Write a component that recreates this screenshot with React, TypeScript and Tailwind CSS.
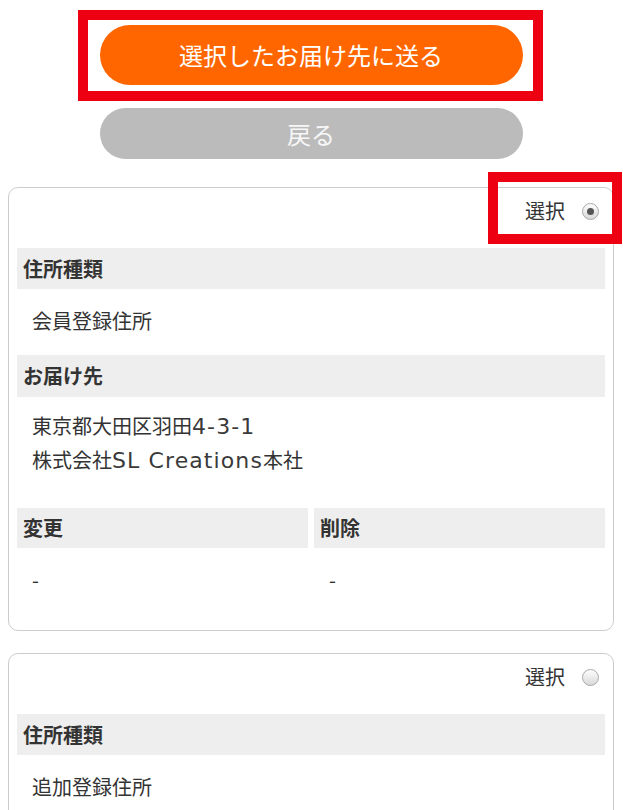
import React from 'react';

type Address = {
  kind: string;
  lines: string[];
  checked: boolean;
};

const ADDRESSES: Address[] = [
  { kind: '会員登録住所', lines: ['東京都大田区羽田4-3-1', '株式会社SL Creations本社'], checked: true },
  { kind: '追加登録住所', lines: ['東京都港区芝公園4-2-8', '株式会社SL Creations東京支店'], checked: false },
];

// latin runs are set in a wider face, like the original page
function Mixed({ text }: { text: string }) {
  const parts = text.split(/([A-Za-z0-9\- ]+)/).filter(Boolean);
  return (
    <>
      {parts.map((p, i) =>
        /^[A-Za-z0-9\- ]+$/.test(p) ? (
          <span key={i} className="font-['DejaVu_Sans',sans-serif] text-[22px] leading-none tracking-[1.1px] text-[#3a3a3a]">
            {p}
          </span>
        ) : (
          <span key={i}>{p}</span>
        )
      )}
    </>
  );
}

function Radio({ checked }: { checked: boolean }) {
  return (
    <span className="flex h-[17px] w-[17px] items-center justify-center rounded-full border border-[#a8a8a8] bg-linear-to-b from-[#fdfdfd] to-[#d9d9d9]">
      {checked && <span className="h-[7px] w-[7px] rounded-full bg-[#555555]" />}
    </span>
  );
}

function AddressCard({ item }: { item: Address }) {
  return (
    <div className="rounded-[10px] border border-[#cccccc] px-2 pb-2">
      {/* select */}
      <div className="mt-[10px] mb-[24px] flex h-[26px] items-center justify-end gap-[17px] pr-[6px]">
        <span className="text-[20px] leading-none text-[#333333]">選択</span>
        <Radio checked={item.checked} />
      </div>

      <div className="flex h-[41px] items-center bg-[#eeeeee] pl-[6px] text-[20px] font-bold text-[#333333]">
        住所種類
      </div>
      <div className="pt-[15px] pb-[17px] pl-[15px] text-[20px] leading-[34px] text-[#333333]">{item.kind}</div>

      <div className="flex h-[42px] items-center bg-[#eeeeee] pl-[6px] text-[20px] font-bold text-[#333333]">
        お届け先
      </div>
      <div className="pt-[12px] pb-[31px] pl-[15px] text-[20px] text-[#333333]">
        {item.lines.map(line => (
          <div key={line} className="h-[34px] overflow-hidden whitespace-nowrap leading-[34px]">
            <Mixed text={line} />
          </div>
        ))}
      </div>

      <div className="grid grid-cols-2 gap-x-[6px]">
        <div className="flex h-[40px] items-center bg-[#eeeeee] pl-[6px] text-[20px] font-bold text-[#333333]">変更</div>
        <div className="flex h-[40px] items-center bg-[#eeeeee] pl-[6px] text-[20px] font-bold text-[#333333]">削除</div>
        <div className="pt-[15px] pb-[25px] pl-[15px] text-[20px] leading-[34px] text-[#333333]">-</div>
        <div className="pt-[15px] pb-[25px] pl-[15px] text-[20px] leading-[34px] text-[#333333]">-</div>
      </div>
    </div>
  );
}

export default function App() {
  return (
    <div className="relative min-h-[810px] bg-white font-['Noto_Sans_CJK_JP','Noto_Sans',sans-serif]">
      <div className="ml-2 w-[606px] pt-[25px]">
        {/* Buttons */}
        <div className="flex flex-col items-center">
          <button className="flex h-[60px] w-[423px] items-center justify-center rounded-full bg-[#ff6600] text-[24px] text-white">
            選択したお届け先に送る
          </button>
          <button className="mt-[23px] flex h-[51px] w-[423px] items-center justify-center rounded-full bg-[#bbbbbb] text-[24px] text-[#f7f7f7]">
            戻る
          </button>
        </div>

        <div className="mt-[28px] flex flex-col gap-[22px]">
          {ADDRESSES.map(item => (
            <AddressCard key={item.kind} item={item} />
          ))}
        </div>
      </div>

      {/* annotation boxes */}
      <div className="pointer-events-none absolute top-[10px] left-[78px] h-[91px] w-[465px] border-[10px] border-[#ec0012]" />
      <div className="pointer-events-none absolute top-[172px] left-[488px] h-[72px] w-[134px] border-[10px] border-[#ec0012]" />
    </div>
  );
}
